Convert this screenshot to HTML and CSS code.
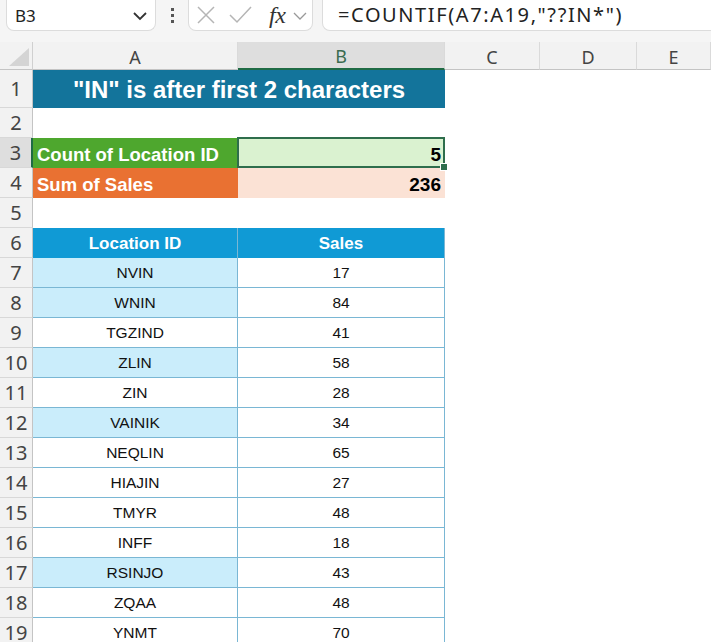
FILE: index.html
```html
<!DOCTYPE html>
<html>
<head>
<meta charset="utf-8">
<link rel="stylesheet" href="styles.css">
</head>
<body>
<div class="app">
  <div class="toolbar">
    <div class="namebox">
      <span class="ref">B3</span>
      <svg class="chev" width="16" height="10" viewBox="0 0 16 10"><path d="M2 2 L8 8 L14 2" fill="none" stroke="#333" stroke-width="1.8"/></svg>
    </div>
    <div class="dots"><span></span><span></span><span></span></div>
    <div class="fxbox">
      <svg width="20" height="20" viewBox="0 0 20 20"><path d="M2 2 L18 18 M18 2 L2 18" fill="none" stroke="#b5b5b5" stroke-width="1.5"/></svg>
      <svg width="24" height="20" viewBox="0 0 24 20"><path d="M2 10 L9 17 L23 2" fill="none" stroke="#b5b5b5" stroke-width="1.5"/></svg>
      <span class="fx">fx</span>
      <svg width="14" height="9" viewBox="0 0 14 9"><path d="M1 2 L7 8 L13 2" fill="none" stroke="#999" stroke-width="1.3"/></svg>
    </div>
    <div class="formula">=COUNTIF(A7:A19,"??IN*")</div>
  </div>

  <div class="sheet">
    <div class="corner"><svg width="33" height="28" viewBox="0 0 33 28"><polygon points="29,6 29,24 9,24" fill="#d4d4d4"/></svg></div>
    <div class="colhead">A</div>
    <div class="colhead sel">B</div>
    <div class="colhead">C</div>
    <div class="colhead">D</div>
    <div class="colhead">E</div>

    <div class="rowhead">1</div>
    <div class="title">"IN" is after first 2 characters</div>
    <div class="rest"></div>

    <div class="rowhead">2</div>
    <div class="cell"></div><div class="cell"></div><div class="rest"></div>

    <div class="rowhead sel">3</div>
    <div class="cell lbl green">Count of Location ID</div>
    <div class="cell val lgreen active">5</div>
    <div class="rest"></div>

    <div class="rowhead">4</div>
    <div class="cell lbl orange">Sum of Sales</div>
    <div class="cell val lorange">236</div>
    <div class="rest"></div>

    <div class="rowhead">5</div>
    <div class="cell"></div><div class="cell"></div><div class="rest"></div>

    <div class="rowhead">6</div>
    <div class="cell th">Location ID</div>
    <div class="cell th">Sales</div>
    <div class="rest"></div>

    <div class="rowhead">7</div><div class="cell td hl">NVIN</div><div class="cell td">17</div><div class="rest"></div>
    <div class="rowhead">8</div><div class="cell td hl">WNIN</div><div class="cell td">84</div><div class="rest"></div>
    <div class="rowhead">9</div><div class="cell td">TGZIND</div><div class="cell td">41</div><div class="rest"></div>
    <div class="rowhead">10</div><div class="cell td hl">ZLIN</div><div class="cell td">58</div><div class="rest"></div>
    <div class="rowhead">11</div><div class="cell td">ZIN</div><div class="cell td">28</div><div class="rest"></div>
    <div class="rowhead">12</div><div class="cell td hl">VAINIK</div><div class="cell td">34</div><div class="rest"></div>
    <div class="rowhead">13</div><div class="cell td">NEQLIN</div><div class="cell td">65</div><div class="rest"></div>
    <div class="rowhead">14</div><div class="cell td">HIAJIN</div><div class="cell td">27</div><div class="rest"></div>
    <div class="rowhead">15</div><div class="cell td">TMYR</div><div class="cell td">48</div><div class="rest"></div>
    <div class="rowhead">16</div><div class="cell td">INFF</div><div class="cell td">18</div><div class="rest"></div>
    <div class="rowhead">17</div><div class="cell td hl">RSINJO</div><div class="cell td">43</div><div class="rest"></div>
    <div class="rowhead">18</div><div class="cell td">ZQAA</div><div class="cell td">48</div><div class="rest"></div>
    <div class="rowhead">19</div><div class="cell td">YNMT</div><div class="cell td">70</div><div class="rest"></div>
  </div>
</div>
</body>
</html>
```

FILE: styles.css
```css
* { box-sizing: border-box; }
html, body { margin: 0; padding: 0; background: #fff; }
body { width: 711px; height: 642px; overflow: hidden; font-family: "Liberation Sans", Arial, sans-serif; }

.app { width: 711px; }

.toolbar {
  height: 42px;
  background: #f5f5f5;
  display: flex;
  align-items: flex-start;
  padding-left: 6px;
  overflow: hidden;
}
.namebox {
  width: 150px;
  height: 31px;
  background: #fff;
  border: 1px solid #dcdcdc;
  border-top: 0;
  border-radius: 0 0 8px 8px;
  display: flex;
  align-items: center;
  justify-content: space-between;
  padding: 0 7px 0 8px;
}
.ref { font-family: "Noto Sans", sans-serif; font-size: 17px; color: #222; }
.chev { margin-top: 1px; }
.dots {
  width: 32px;
  height: 31px;
  display: flex;
  flex-direction: column;
  align-items: center;
  justify-content: center;
  gap: 3px;
}
.dots span { width: 3px; height: 3px; background: #555; display: block; }
.fxbox {
  width: 125px;
  height: 31px;
  background: #fff;
  border: 1px solid #dcdcdc;
  border-top: 0;
  border-radius: 0 0 8px 8px;
  display: flex;
  align-items: center;
  padding-left: 7px;
}
.fxbox svg:nth-child(2) { margin-left: 12px; }
.fx {
  font-family: "Liberation Serif", serif;
  font-style: italic;
  font-size: 24px;
  line-height: 1;
  color: #333;
  margin-left: 17px;
  margin-right: 8px;
  letter-spacing: -0.5px;
}
.formula {
  flex: 1;
  margin-left: 9px;
  margin-right: -12px;
  height: 31px;
  background: #fff;
  border: 1px solid #dcdcdc;
  border-top: 0;
  border-radius: 0 0 8px 8px;
  padding-left: 15px;
  font-family: "Noto Sans", sans-serif;
  font-size: 20px;
  letter-spacing: 1.6px;
  color: #222;
  line-height: 29px;
  white-space: nowrap;
}

.sheet {
  display: grid;
  grid-template-columns: 33px 205px 207px 95px 97px 74px;
  grid-template-rows: 28px 38px repeat(18, 30px);
}
.corner {
  background: #f2f2f2;
  border-right: 1px solid #d0d0d0;
  border-bottom: 1px solid #c4c4c4;
}
.corner svg { display: block; }
.colhead {
  background: #f2f2f2;
  border-right: 1px solid #dadada;
  border-bottom: 1px solid #c4c4c4;
  font-family: "Noto Sans", sans-serif;
  font-size: 18px;
  color: #444;
  display: flex;
  align-items: center;
  justify-content: center;
  padding-top: 2px;
}
.colhead.sel {
  background: #dedede;
  color: #3a6b4f;
  border-bottom: 2px solid #1f6b45;
}
.rowhead {
  background: #f2f2f2;
  border-right: 1px solid #c4c4c4;
  border-bottom: 1px solid #d8d8d8;
  font-family: "Noto Sans", sans-serif;
  font-size: 20px;
  line-height: 1;
  color: #444;
  display: flex;
  align-items: center;
  justify-content: center;
  padding-top: 1px;
}
.rowhead.sel {
  background: #dedede;
  border-right: 2px solid #1f6b45;
}
.rest { grid-column: 4 / span 3; background: #fff; }

.title {
  grid-column: 2 / span 2;
  background: #13749b;
  color: #fff;
  font-weight: bold;
  font-size: 24px;
  display: flex;
  align-items: center;
  justify-content: center;
  padding-top: 1px;
}
.cell { background: #fff; }
.lbl {
  color: #fff;
  font-weight: bold;
  font-size: 18.5px;
  display: flex;
  align-items: center;
  padding: 3px 0 0 4px;
}
.green { background: #4ea72e; }
.orange { background: #e97132; }
.val {
  color: #000;
  font-weight: bold;
  font-size: 19px;
  display: flex;
  align-items: center;
  justify-content: flex-end;
  padding: 3px 4px 0 0;
}
.lgreen { background: #daf2d0; }
.lorange { background: #fbe2d5; }
.active { position: relative; }
.active::after {
  content: "";
  position: absolute;
  left: -1px; top: -1px; right: 0; bottom: 0;
  border: 2px solid #2e6e4c;
}
.active::before {
  content: "";
  position: absolute;
  right: -3px; bottom: -3px;
  width: 6px; height: 6px;
  background: #2e6e4c;
  border: 1px solid #fff;
  z-index: 2;
}
.th {
  background: #109ad5;
  color: #fff;
  font-weight: bold;
  font-size: 17px;
  display: flex;
  align-items: center;
  justify-content: center;
  border-right: 1px solid #7ab7d4;
  padding-top: 1px;
}
.td {
  font-size: 15.5px;
  line-height: 1.1;
  color: #111;
  display: flex;
  align-items: center;
  justify-content: center;
  border-right: 1px solid #7ab7d4;
  border-bottom: 1px solid #7ab7d4;
  padding-top: 1px;
}
.hl { background: #caedfb; }
```
